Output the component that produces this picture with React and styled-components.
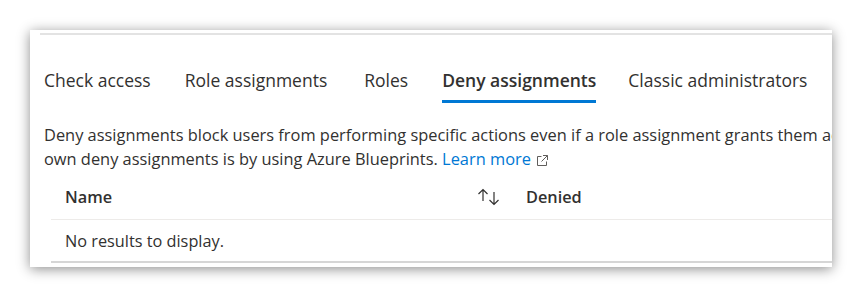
import styled, { createGlobalStyle } from "styled-components";

const Global = createGlobalStyle`
  body {
    margin: 0;
    background: #ffffff;
    font-family: "Open Sans", "Noto Sans", sans-serif;
    color: #323130;
  }
`;

// 바깥 영역
const Page = styled.div`
  padding: 30px 0 0 30px;
  height: 298px;
  box-sizing: border-box;
`;

const Card = styled.div`
  width: 802px;
  height: 237px;
  background: #fff;
  box-shadow: 0 2px 12px rgba(0, 0, 0, 0.45);
  padding: 3px 0 0 10px;
  box-sizing: border-box;
  overflow: hidden;
`;

const TopRule = styled.div`
  height: 2px;
  background: #e3e3e3;
`;

// 탭
const Tabs = styled.div`
  display: flex;
  padding: 32px 0 0 4px;
`;

const Tab = styled.div`
  position: relative;
  margin-right: ${(p) => p.$gap}px;
  font-size: 17.5px;
  line-height: 26px;
  padding-bottom: 10px;
  font-weight: ${(p) => (p.$active ? 600 : 400)};
  white-space: nowrap;
  color: #323130;
  &::after {
    content: "";
    display: ${(p) => (p.$active ? "block" : "none")};
    position: absolute;
    left: 0;
    right: 0;
    bottom: 0;
    height: 3px;
    background: #0078d4;
  }
`;

const Desc = styled.div`
  padding: 20px 0 0 4px;
  font-size: 16.4px;
  line-height: 24px;
  white-space: nowrap;
`;

const Link = styled.a`
  color: #0078d4;
  text-decoration: none;
`;

const ExtIcon = styled.svg`
  margin-left: 6px;
  vertical-align: -1px;
`;

// 테이블
const Table = styled.div`
  margin: 4px 0 0 11px;
`;

const Row = styled.div`
  display: flex;
  align-items: center;
  height: ${(p) => p.$h}px;
  border-bottom: ${(p) => p.$bw}px solid ${(p) => p.$bc};
  font-size: 16.3px;
`;

const NameCol = styled.div`
  width: 463px;
  padding-left: 14px;
  box-sizing: border-box;
  display: flex;
  align-items: center;
  justify-content: space-between;
  padding-right: 13px;
  font-weight: ${(p) => (p.$bold ? 600 : 400)};
`;

const DeniedCol = styled.div`
  padding-left: 12px;
  font-weight: 600;
`;

function SortIcon() {
  return (
    <svg width="24" height="18" viewBox="0 0 24 18" fill="none" stroke="#323130" strokeWidth="1.2">
      <path d="M6 1.5 V13 M1.5 6 L6 1.5 L10.5 6" />
      <path d="M17 4 V16.5 M12.5 12 L17 16.5 L21.5 12" />
    </svg>
  );
}

export default function App() {
  const tabs = [
    { label: "Check access", gap: 34 },
    { label: "Role assignments", gap: 37 },
    { label: "Roles", gap: 34 },
    { label: "Deny assignments", gap: 32, active: true },
    { label: "Classic administrators", gap: 0 },
  ];

  return (
    <>
      <Global />
      <Page>
        <Card>
          <TopRule />
          <Tabs>
            {tabs.map((t) => (
              <Tab key={t.label} $gap={t.gap} $active={t.active}>
                {t.label}
              </Tab>
            ))}
          </Tabs>
          <Desc>
            Deny assignments block users from performing specific actions even if a role assignment grants them access. Currently, the only way to apply your
            <br />
            own deny assignments is by using Azure Blueprints.{" "}
            <Link href="#">Learn more</Link>
            <ExtIcon width="11" height="11" viewBox="0 0 11 11" fill="none" stroke="#605e5c" strokeWidth="1">
              <path d="M4.5 1.5 H0.5 V10.5 H9.5 V6.5" />
              <path d="M6 0.5 H10.5 V5 M10.5 0.5 L4.5 6.5" />
            </ExtIcon>
          </Desc>
          <Table>
            <Row $h={44} $bw={1} $bc="#edebe9">
              <NameCol $bold>
                <span>Name</span>
                <SortIcon />
              </NameCol>
              <DeniedCol>Denied</DeniedCol>
            </Row>
            <Row $h={41} $bw={2} $bc="#d6d6d6">
              <NameCol>No results to display.</NameCol>
            </Row>
          </Table>
        </Card>
      </Page>
    </>
  );
}
